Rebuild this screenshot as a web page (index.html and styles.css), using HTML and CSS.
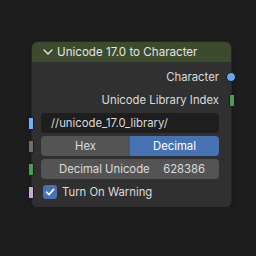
FILE: index.html
```html
<!DOCTYPE html>
<html lang="en">
<head>
    <meta charset="UTF-8">
    <title>Unicode 17.0 to Character</title>
    <link rel="stylesheet" href="styles.css">
</head>
<body>
    <div class="node">
        <div class="node-header">
            <svg class="chevron" width="10" height="8" viewBox="0 0 10 8">
                <path d="M1 2 L5 6 L9 2" fill="none" stroke="#e6e6e6" stroke-width="1.4" stroke-linecap="round" stroke-linejoin="round"/>
            </svg>
            <span>Unicode 17.0 to Character</span>
        </div>
        <div class="node-body">
            <div class="row out">
                Character
                <span class="socket circle"></span>
            </div>
            <div class="row out">
                Unicode Library Index
                <span class="socket rect green-out"></span>
            </div>
            <div class="row">
                <span class="socket rect string"></span>
                <div class="field">//unicode_17.0_library/</div>
            </div>
            <div class="row">
                <span class="socket rect menu"></span>
                <div class="toggle">
                    <div class="opt">Hex</div>
                    <div class="opt active">Decimal</div>
                </div>
            </div>
            <div class="row">
                <span class="socket rect int"></span>
                <div class="number">
                    <span>Decimal Unicode</span>
                    <span>628386</span>
                </div>
            </div>
            <div class="row">
                <span class="socket rect bool"></span>
                <label class="check">
                    <span class="box">
                        <svg width="10" height="10" viewBox="0 0 10 10">
                            <path d="M1.5 5.2 L4 7.6 L8.6 2.4" fill="none" stroke="#fff" stroke-width="1.6" stroke-linecap="round" stroke-linejoin="round"/>
                        </svg>
                    </span>
                    Turn On Warning
                </label>
            </div>
        </div>
    </div>
</body>
</html>
```

FILE: styles.css
```css
* {
    margin: 0;
    padding: 0;
    box-sizing: border-box;
}

body {
    background-color: #1d1d1d;
    font-family: Inter, "Noto Sans", sans-serif;
    font-size: 11.3px;
    color: #dcdcdc;
}

.node {
    position: relative;
    margin: 42px 0 0 32px;
    width: 199px;
    background-color: #303030;
    border-radius: 6px;
    box-shadow: 0 0 0 1px #262626, 0 5px 6px rgba(0, 0, 0, 0.45);
}

.node-header {
    height: 20px;
    background-color: #3c4a2d;
    border-radius: 6px 6px 0 0;
    display: flex;
    align-items: center;
    padding-left: 11px;
    gap: 4px;
    font-size: 11.6px;
    color: #e4e4e4;
}

.node-body {
    padding: 5px 12px 5px 9px;
    display: flex;
    flex-direction: column;
    gap: 3px;
}

.row {
    height: 20px;
    display: flex;
    align-items: center;
}

.row.out {
    justify-content: flex-end;
}

.socket {
    position: absolute;
    border: 1px solid #1a1a1a;
}

.socket.circle {
    right: -5px;
    width: 10px;
    height: 10px;
    border-radius: 50%;
    background-color: #6aa5f5;
}

.socket.rect {
    width: 6px;
    height: 13px;
    border-radius: 1px;
}

.green-out {
    right: -4px;
    background-color: #4f9a55;
}

.string {
    left: -4px;
    background-color: #70b2ff;
}

.menu {
    left: -4px;
    background-color: #6e6e6e;
}

.int {
    left: -4px;
    background-color: #4f9a55;
}

.bool {
    left: -4px;
    background-color: #cca6d6;
}

.field {
    flex: 1;
    height: 20px;
    background-color: #1e1e1e;
    border-radius: 4px;
    padding-left: 10px;
    line-height: 20px;
}

.toggle {
    flex: 1;
    display: flex;
    height: 20px;
    border-radius: 4px;
    overflow: hidden;
}

.opt {
    flex: 1;
    text-align: center;
    line-height: 20px;
    background-color: #545454;
}

.opt.active {
    background-color: #4772b3;
    color: #fff;
}

.number {
    flex: 1;
    height: 20px;
    display: flex;
    justify-content: space-between;
    align-items: center;
    padding: 0 14px 0 18px;
    background-color: #545454;
    border-radius: 4px;
}

.check {
    display: flex;
    align-items: center;
    gap: 5px;
    padding-left: 2px;
}

.box {
    width: 14px;
    height: 14px;
    border-radius: 3px;
    background-color: #4772b3;
    display: flex;
    align-items: center;
    justify-content: center;
}
```
